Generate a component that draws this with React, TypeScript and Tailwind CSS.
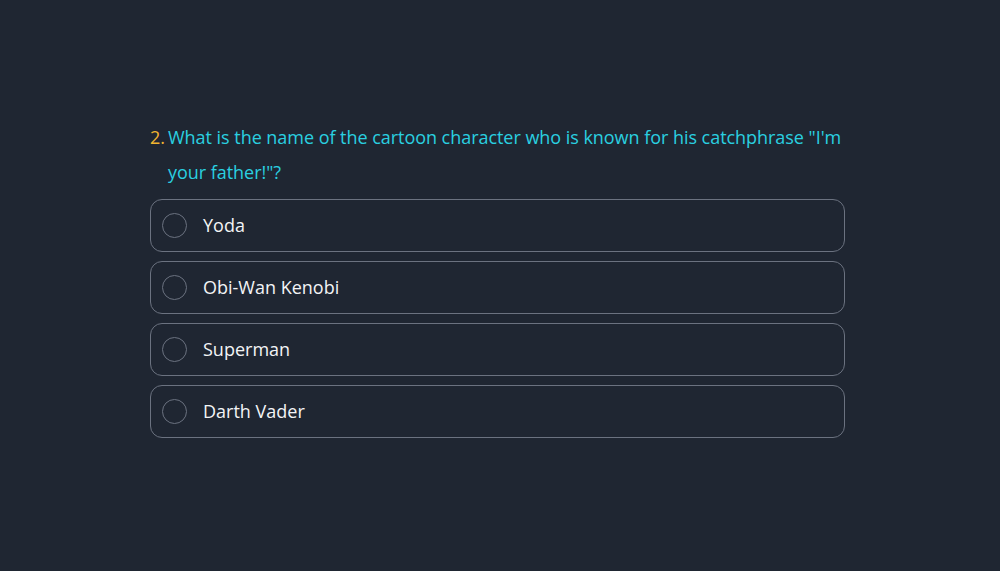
import React from 'react';

const options = ['Yoda', 'Obi-Wan Kenobi', 'Superman', 'Darth Vader'];

const App: React.FC = () => {
  return (
    <div
      className="w-full min-h-[571px] bg-[#1f2632] pt-[120px]"
      style={{ fontFamily: '"Open Sans", "Noto Sans", sans-serif' }}
    >
      <div className="w-[695px] ml-[150px]">
        {/* Question */}
        <div className="flex text-[18px] leading-[35px]">
          <span className="text-[#f2b430] mr-[3px]">2.</span>
          <p className="text-[#2ad0e0] tracking-[-0.04px]">
            What is the name of the cartoon character who is known for his catchphrase "I'm your father!"?
          </p>
        </div>

        {/* Options */}
        <div className="flex flex-col gap-[9px] mt-[9px]">
          {options.map((opt) => (
            <label
              key={opt}
              className="flex items-center h-[53px] px-[11px] border border-[#6b7280] rounded-[12px] cursor-pointer"
            >
              <span className="w-[25px] h-[25px] rounded-full border-[1.5px] border-[#6b7280] shrink-0" />
              <span className="ml-[16px] text-[18px] text-[#f3f4f6]">{opt}</span>
            </label>
          ))}
        </div>
      </div>
    </div>
  );
};

export default App;
